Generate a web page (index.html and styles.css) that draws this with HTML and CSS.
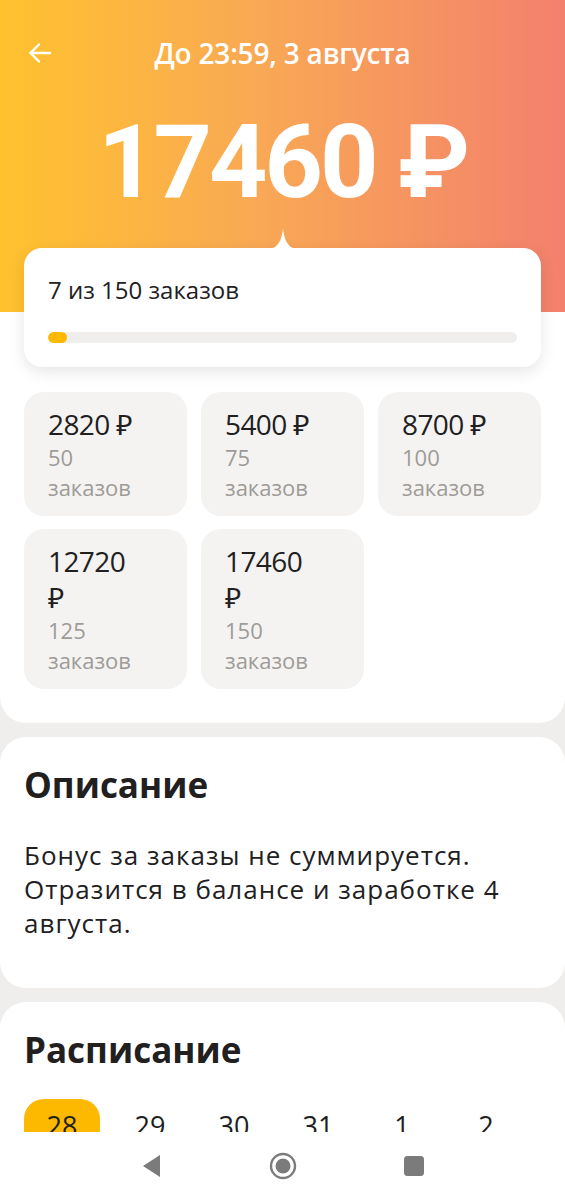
FILE: index.html
```html
<!DOCTYPE html>
<html lang="ru">
<head>
    <meta charset="UTF-8">
    <meta name="viewport" content="width=device-width, initial-scale=1.0">
    <title>Бонус за заказы</title>
    <link rel="stylesheet" href="styles.css">
</head>
<body>
    <div class="screen">
        <div class="content">
            <div class="top">
                <div class="hero">
                    <div class="hero-bar">
                        <button class="back" aria-label="Назад">
                            <svg width="26" height="26" viewBox="0 0 26 26" fill="none" stroke="#fff" stroke-width="2.4" stroke-linecap="round" stroke-linejoin="round">
                                <path d="M23 13H3.5"/>
                                <path d="M12 4.5L3.5 13L12 21.5"/>
                            </svg>
                        </button>
                        <div class="hero-title">До 23:59, 3 августа</div>
                    </div>
                    <div class="hero-amount">17460 ₽</div>
                </div>

                <div class="goal-card">
                    <svg class="goal-tip" width="46" height="22" viewBox="0 0 46 22">
                        <path d="M0 22C14 22 21 19 23 0C25 19 32 22 46 22Z" fill="#fff"/>
                    </svg>
                    <div class="goal-text">7 из 150 заказов</div>
                    <div class="progress">
                        <div class="progress-fill" style="width: 4%"></div>
                    </div>
                </div>

                <div class="tiles">
                    <div class="tile">
                        <div class="tile-price">2820 ₽</div>
                        <div class="tile-count">50 заказов</div>
                    </div>
                    <div class="tile">
                        <div class="tile-price">5400 ₽</div>
                        <div class="tile-count">75 заказов</div>
                    </div>
                    <div class="tile">
                        <div class="tile-price">8700 ₽</div>
                        <div class="tile-count">100 заказов</div>
                    </div>
                    <div class="tile">
                        <div class="tile-price">12720 ₽</div>
                        <div class="tile-count">125 заказов</div>
                    </div>
                    <div class="tile">
                        <div class="tile-price">17460 ₽</div>
                        <div class="tile-count">150 заказов</div>
                    </div>
                </div>
            </div>

            <div class="section">
                <h2>Описание</h2>
                <p class="desc">Бонус за заказы не суммируется. Отразится в балансе и заработке 4 августа.</p>
            </div>

            <div class="section">
                <h2>Расписание</h2>
                <div class="days">
                    <div class="day active">28</div>
                    <div class="day">29</div>
                    <div class="day">30</div>
                    <div class="day">31</div>
                    <div class="day">1</div>
                    <div class="day">2</div>
                </div>
            </div>
        </div>

        <div class="navbar">
            <span class="nav-btn">
                <svg width="20" height="26" viewBox="0 0 20 26"><path d="M18 2V24L1 13Z" fill="#7b7b7b"/></svg>
            </span>
            <span class="nav-btn">
                <svg width="28" height="28" viewBox="0 0 28 28"><circle cx="14" cy="14" r="12" fill="none" stroke="#7b7b7b" stroke-width="2.4"/><circle cx="14" cy="14" r="7.5" fill="#7b7b7b"/></svg>
            </span>
            <span class="nav-btn">
                <svg width="22" height="22" viewBox="0 0 22 22"><rect x="1" y="1" width="20" height="20" rx="3.5" fill="#7b7b7b"/></svg>
            </span>
        </div>
    </div>
</body>
</html>
```

FILE: styles.css
```css
* {
    box-sizing: border-box;
}

body {
    margin: 0;
    font-family: "Open Sans", "Noto Sans", Arial, sans-serif;
    color: #21201f;
    background-color: #efeeec;
}

.screen {
    height: 100vh;
    display: flex;
    flex-direction: column;
}

.content {
    flex: 1;
    overflow: hidden;
}

/* header block */
.top {
    background-color: #fff;
    border-radius: 0 0 26px 26px;
    padding-bottom: 34px;
}

.hero {
    height: 312px;
    padding-top: 30px;
    background: linear-gradient(90deg, #ffc22e 0%, #f9a954 45%, #f3806d 100%);
    color: #fff;
}

.hero-bar {
    position: relative;
    height: 46px;
    display: flex;
    align-items: center;
    justify-content: center;
}

.back {
    position: absolute;
    left: 27px;
    top: 10px;
    padding: 0;
    border: none;
    background: none;
    display: flex;
}

.hero-title {
    font-size: 28px;
    font-weight: 600;
    letter-spacing: -0.2px;
}

.hero-amount {
    margin-top: 26px;
    text-align: center;
    font-family: Roboto, "Open Sans", sans-serif;
    font-weight: 700;
    font-size: 102px;
    line-height: 120px;
    letter-spacing: -3px;
}

.goal-card {
    position: relative;
    margin: -64px 24px 0;
    height: 119px;
    padding: 26px 24px 0;
    background-color: #fff;
    border-radius: 18px;
    box-shadow: 0 5px 16px rgba(0, 0, 0, 0.1);
}

.goal-tip {
    position: absolute;
    left: 50%;
    top: -20px;
    margin-left: -23px;
}

.goal-text {
    font-size: 24px;
    line-height: 32px;
}

.progress {
    margin-top: 26px;
    height: 11px;
    border-radius: 6px;
    background-color: #efeeec;
    overflow: hidden;
}

.progress-fill {
    height: 100%;
    border-radius: 6px;
    background-color: #fcb900;
}

.tiles {
    margin: 25px 24px 0;
    display: grid;
    grid-template-columns: repeat(3, 1fr);
    gap: 13px 14px;
}

.tile {
    background-color: #f4f3f1;
    border-radius: 20px;
    padding: 14px 40px 14px 24px;
}

.tile-price {
    font-size: 28px;
    line-height: 36px;
    letter-spacing: -0.6px;
}

.tile-count {
    font-size: 22px;
    line-height: 30px;
    color: #9e9b98;
}

/* info sections */
.section {
    margin-top: 14px;
    background-color: #fff;
    border-radius: 26px;
    padding: 25px 24px 48px;
}

.section h2 {
    margin: 0;
    font-size: 35px;
    line-height: 46px;
    font-weight: 700;
}

.desc {
    margin: 30px 0 0;
    font-size: 26px;
    line-height: 34px;
    letter-spacing: 1px;
}

.days {
    margin-top: 26px;
    display: flex;
}

.day {
    width: 84px;
    flex-shrink: 0;
    padding: 9px 0 14px;
    text-align: center;
    font-size: 27px;
    line-height: 36px;
}

.day.active {
    width: 76px;
    margin-right: 8px;
    background-color: #fcb900;
    border-radius: 20px;
}

.navbar {
    height: 68px;
    background-color: #fff;
    display: flex;
    align-items: center;
    justify-content: center;
    gap: 83px;
}

.nav-btn {
    width: 48px;
    display: flex;
    justify-content: center;
}
```
